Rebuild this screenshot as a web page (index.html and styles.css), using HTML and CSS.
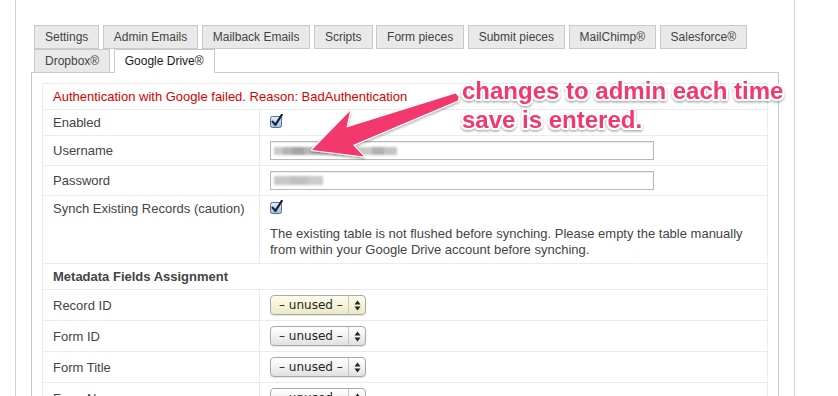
FILE: index.html
```html
<!DOCTYPE html>
<html>
<head>
<meta charset="utf-8">
<title>Google Drive settings</title>
<link rel="stylesheet" href="styles.css">
</head>
<body>
<div class="page">
  <ul class="tabs">
    <li class="tab">Settings</li>
    <li class="tab">Admin Emails</li>
    <li class="tab">Mailback Emails</li>
    <li class="tab">Scripts</li>
    <li class="tab">Form pieces</li>
    <li class="tab">Submit pieces</li>
    <li class="tab">MailChimp®</li>
    <li class="tab">Salesforce®</li>
    <li class="tab">Dropbox®</li>
    <li class="tab active">Google Drive®</li>
  </ul>
  <div class="panel">
    <table class="form">
      <colgroup><col class="c1"><col></colgroup>
      <tr><td colspan="2" class="error">Authentication with Google failed. Reason: BadAuthentication</td></tr>
      <tr>
        <td class="label">Enabled</td>
        <td><span class="cb"><svg width="14" height="15" viewBox="0 0 14 15"><defs><linearGradient id="cbg" x1="0" y1="0" x2="0" y2="1"><stop offset="0" stop-color="#e6f0fa"/><stop offset="1" stop-color="#9dbde3"/></linearGradient></defs><rect x="0.5" y="2.5" width="11" height="11" rx="2" fill="url(#cbg)" stroke="#5b6e8c"/><path d="M2.6 7.6 L5.4 10.8 L11.8 0.8" fill="none" stroke="#17223d" stroke-width="2.2" stroke-linecap="round" stroke-linejoin="round"/></svg></span></td>
      </tr>
      <tr>
        <td class="label">Username</td>
        <td class="field"><div class="input"><span class="blur user"></span></div></td>
      </tr>
      <tr>
        <td class="label">Password</td>
        <td class="field"><div class="input"><span class="blur pass"></span></div></td>
      </tr>
      <tr class="top">
        <td class="label">Synch Existing Records (caution)</td>
        <td>
          <span class="cb"><svg width="14" height="15" viewBox="0 0 14 15"><rect x="0.5" y="2.5" width="11" height="11" rx="2" fill="url(#cbg)" stroke="#5b6e8c"/><path d="M2.6 7.6 L5.4 10.8 L11.8 0.8" fill="none" stroke="#17223d" stroke-width="2.2" stroke-linecap="round" stroke-linejoin="round"/></svg></span>
          <p class="note">The existing table is not flushed before synching. Please empty the table manually from within your Google Drive account before synching.</p>
        </td>
      </tr>
      <tr><td colspan="2" class="section">Metadata Fields Assignment</td></tr>
      <tr>
        <td class="label">Record ID</td>
        <td class="field"><div class="select focus"><span class="sel-text">– unused –</span><span class="sel-arrows"><svg width="7" height="11" viewBox="0 0 7 11"><path d="M3.5 0.5 L6.5 4.5 L0.5 4.5Z M3.5 10.5 L6.5 6.5 L0.5 6.5Z" fill="#222"/></svg></span></div></td>
      </tr>
      <tr>
        <td class="label">Form ID</td>
        <td class="field"><div class="select"><span class="sel-text">– unused –</span><span class="sel-arrows"><svg width="7" height="11" viewBox="0 0 7 11"><path d="M3.5 0.5 L6.5 4.5 L0.5 4.5Z M3.5 10.5 L6.5 6.5 L0.5 6.5Z" fill="#222"/></svg></span></div></td>
      </tr>
      <tr>
        <td class="label">Form Title</td>
        <td class="field"><div class="select"><span class="sel-text">– unused –</span><span class="sel-arrows"><svg width="7" height="11" viewBox="0 0 7 11"><path d="M3.5 0.5 L6.5 4.5 L0.5 4.5Z M3.5 10.5 L6.5 6.5 L0.5 6.5Z" fill="#222"/></svg></span></div></td>
      </tr>
      <tr>
        <td class="label">Form Name</td>
        <td class="field"><div class="select"><span class="sel-text">– unused –</span><span class="sel-arrows"><svg width="7" height="11" viewBox="0 0 7 11"><path d="M3.5 0.5 L6.5 4.5 L0.5 4.5Z M3.5 10.5 L6.5 6.5 L0.5 6.5Z" fill="#222"/></svg></span></div></td>
      </tr>
    </table>
  </div>
</div>

<svg class="annotation" width="838" height="396" viewBox="0 0 838 396">
  <defs>
    <filter id="shadow" x="-10%" y="-20%" width="120%" height="150%">
      <feDropShadow dx="0" dy="1.5" stdDeviation="1.2" flood-color="#000" flood-opacity="0.35"/>
    </filter>
  </defs>
  <g filter="url(#shadow)">
    <polygon class="arrow" points="312,150 350,111 346.5,127.5 455.5,93.5 458.5,96.5 458,100.5 353,145 364,156.5"/>
    <text class="note-text" x="462" y="99">changes to admin each time</text>
    <text class="note-text" x="462" y="128">save is entered.</text>
  </g>
</svg>
</body>
</html>
```

FILE: styles.css
```css
html, body {
  margin: 0;
  padding: 0;
  background: #fff;
}

body {
  font-family: "Liberation Sans", Arial, Helvetica, sans-serif;
  font-size: 13px;
  color: #444;
  height: 396px;
  overflow: hidden;
  position: relative;
}

.page {
  margin-left: 15px;
  width: 780px;
  min-height: 396px;
  box-sizing: border-box;
  border-left: 1px solid #d2d2d2;
  border-right: 1px solid #d2d2d2;
  padding: 25px 15px 0 15px;
}

.tabs {
  list-style: none;
  margin: 0 0 -1px 3px;
  padding: 0;
  display: flex;
  flex-wrap: wrap;
}

.tab {
  height: 22px;
  line-height: 22px;
  padding: 0 10px;
  margin-right: 3.5px;
  border: 1px solid #c9c9c9;
  background: #e9e9e9;
  font-size: 12px;
  color: #444;
  white-space: nowrap;
}

.tab.active {
  background: #fff;
  border-bottom-color: #fff;
  color: #1a1a1a;
  position: relative;
  z-index: 1;
}

.panel {
  border: 1px solid #c9c9c9;
  border-bottom: none;
  padding: 10px;
  min-height: 340px;
}

.form {
  width: 100%;
  border-collapse: collapse;
  table-layout: fixed;
  border: 1px solid #ebebeb;
}

.form col.c1 {
  width: 217px;
}

.form td {
  border-top: 1px solid #ebebeb;
  padding: 5px 10px;
  line-height: 15px;
  vertical-align: middle;
}

.form tr.top td {
  vertical-align: top;
}

.form td.field {
  padding-top: 5px;
  padding-bottom: 5px;
}

.form td.label {
  border-right: 1px solid #ebebeb;
}

.form td.error {
  color: #d90000;
}

.form td.section {
  font-weight: bold;
}

.cb {
  display: inline-block;
  height: 15px;
  vertical-align: top;
}

.cb svg {
  display: block;
  margin-top: -1px;
}

.note {
  margin: 10px 0 0 0;
  line-height: 16px;
}

.input {
  width: 384px;
  height: 19px;
  box-sizing: border-box;
  border: 1px solid #b8b8b8;
  box-shadow: inset 0 1px 1px rgba(0, 0, 0, 0.08);
  background: #fff;
  display: flex;
  align-items: center;
  padding-left: 3px;
}

.blur {
  display: block;
  height: 8px;
  filter: blur(0.9px);
}

.blur.user {
  width: 123px;
  background: linear-gradient(90deg,
    #c9c9c9 0 9px, #b3b3b3 9px 18px, #a3a3a3 18px 30px, #b8b8b8 30px 40px,
    #c2c2c2 40px 52px, #cdcdcd 52px 60px, #b6b6b6 60px 72px, #aaaaaa 72px 84px,
    #cacaca 84px 98px, #b1b1b1 98px 110px, #c4c4c4 110px 123px);
}

.blur.pass {
  width: 49px;
  height: 9px;
  background: linear-gradient(90deg, #c8c8c8 0 16px, #c0c0c0 16px 34px, #cbcbcb 34px 49px);
}

.select {
  display: flex;
  align-items: stretch;
  width: 96px;
  height: 20px;
  box-sizing: border-box;
  border: 1px solid #a9a9a9;
  border-radius: 4px;
  background: linear-gradient(#ffffff, #f3f3f3 45%, #e0e0e0);
  box-shadow: 0 1px 1px rgba(0, 0, 0, 0.12);
  font-family: "DejaVu Sans", "Liberation Sans", sans-serif;
  font-size: 12px;
  color: #1e1e1e;
}

.select.focus {
  background: linear-gradient(#fdfcec, #f6f5da 45%, #ebe9c4);
}

.sel-text {
  width: 77px;
  box-sizing: border-box;
  padding-left: 8px;
  line-height: 18px;
  white-space: nowrap;
}

.sel-arrows {
  flex: 1;
  border-left: 1px solid #c8c8c8;
  display: flex;
  align-items: center;
  justify-content: center;
}

.sel-arrows svg {
  display: block;
}

.annotation {
  position: absolute;
  left: 0;
  top: 0;
  pointer-events: none;
}

.arrow {
  fill: #f2386c;
  stroke: #fff;
  stroke-width: 2;
  stroke-linejoin: round;
  paint-order: stroke;
}

.note-text {
  font-family: "Liberation Sans", Arial, sans-serif;
  font-weight: bold;
  font-size: 24px;
  fill: #f2386c;
  stroke: #fff;
  stroke-width: 4;
  stroke-linejoin: round;
  paint-order: stroke;
}
```
